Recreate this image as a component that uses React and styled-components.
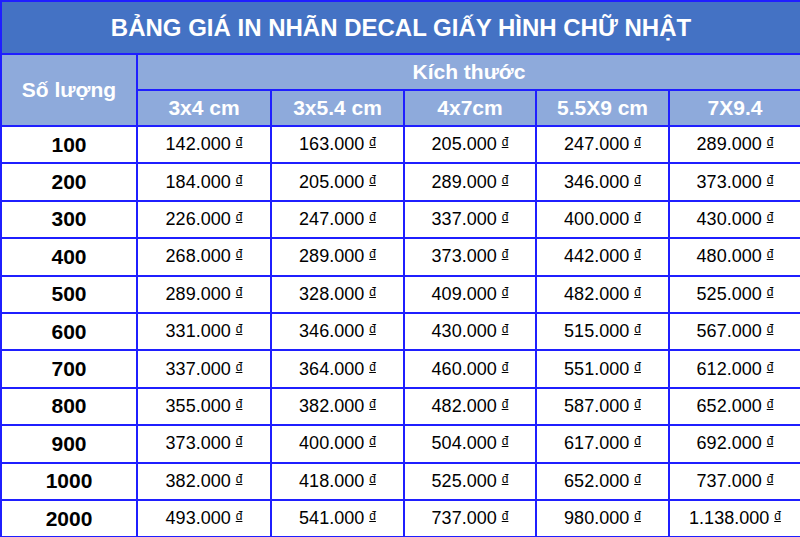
import React from "react";
import styled, { createGlobalStyle } from "styled-components";

const widths = [136, 134, 133, 132, 133, 132];

const sizes = ["3x4 cm", "3x5.4 cm", "4x7cm", "5.5X9 cm", "7X9.4"];

const rows = [
  ["100", "142.000", "163.000", "205.000", "247.000", "289.000"],
  ["200", "184.000", "205.000", "289.000", "346.000", "373.000"],
  ["300", "226.000", "247.000", "337.000", "400.000", "430.000"],
  ["400", "268.000", "289.000", "373.000", "442.000", "480.000"],
  ["500", "289.000", "328.000", "409.000", "482.000", "525.000"],
  ["600", "331.000", "346.000", "430.000", "515.000", "567.000"],
  ["700", "337.000", "364.000", "460.000", "551.000", "612.000"],
  ["800", "355.000", "382.000", "482.000", "587.000", "652.000"],
  ["900", "373.000", "400.000", "504.000", "617.000", "692.000"],
  ["1000", "382.000", "418.000", "525.000", "652.000", "737.000"],
  ["2000", "493.000", "541.000", "737.000", "980.000", "1.138.000"],
];

export default function App() {
  return (
    <>
      <GlobalStyle />
      <Table>
        <colgroup>
          {widths.map((w, i) => (
            <Col key={i} $w={w} />
          ))}
        </colgroup>
        <thead>
          <tr>
            <Title colSpan={6}>BẢNG GIÁ IN NHÃN DECAL GIẤY HÌNH CHỮ NHẬT</Title>
          </tr>
          <tr>
            <Head rowSpan={2} $tall>
              Số lượng
            </Head>
            <Head colSpan={5}>Kích thước</Head>
          </tr>
          <tr>
            {sizes.map((s) => (
              <Head key={s}>{s}</Head>
            ))}
          </tr>
        </thead>
        <tbody>
          {rows.map(([qty, ...prices]) => (
            <Row key={qty}>
              <Qty>{qty}</Qty>
              {prices.map((p, i) => (
                <Price key={i}>
                  {p} <Dong>đ</Dong>
                </Price>
              ))}
            </Row>
          ))}
        </tbody>
      </Table>
    </>
  );
}

const GlobalStyle = createGlobalStyle`
  html, body {
    margin: 0;
    padding: 0;
    background: #ffffff;
    font-family: "Liberation Sans", Arial, sans-serif;
  }
`;

const Table = styled.table`
  width: 800px;
  height: 537px;
  border-collapse: collapse;
  table-layout: fixed;
  border: 2px solid #1f1fff;
`;

const Col = styled.col`
  width: ${({ $w }) => $w}px;
`;

const Title = styled.th`
  height: 51px;
  padding: 0;
  background: #4472c4;
  color: #ffffff;
  font-size: 24px;
  font-weight: bold;
  text-align: center;
  border: 2px solid #1f1fff;
`;

const Head = styled.th`
  height: ${({ $tall }) => ($tall ? "auto" : "34px")};
  padding: 0;
  background: #8eaadb;
  color: #ffffff;
  font-size: 21px;
  font-weight: bold;
  text-align: center;
  border: 2px solid #1f1fff;
`;

const Row = styled.tr`
  height: 37.4px;
`;

const Qty = styled.td`
  padding: 0;
  font-size: 21px;
  font-weight: bold;
  color: #000000;
  text-align: center;
  border: 2px solid #1f1fff;
`;

const Price = styled.td`
  padding: 0;
  font-size: 18px;
  color: #000000;
  text-align: center;
  border: 2px solid #1f1fff;
`;

const Dong = styled.span`
  font-size: 12px;
  vertical-align: 4px;
  text-decoration: underline;
  text-underline-offset: 1px;
`;
